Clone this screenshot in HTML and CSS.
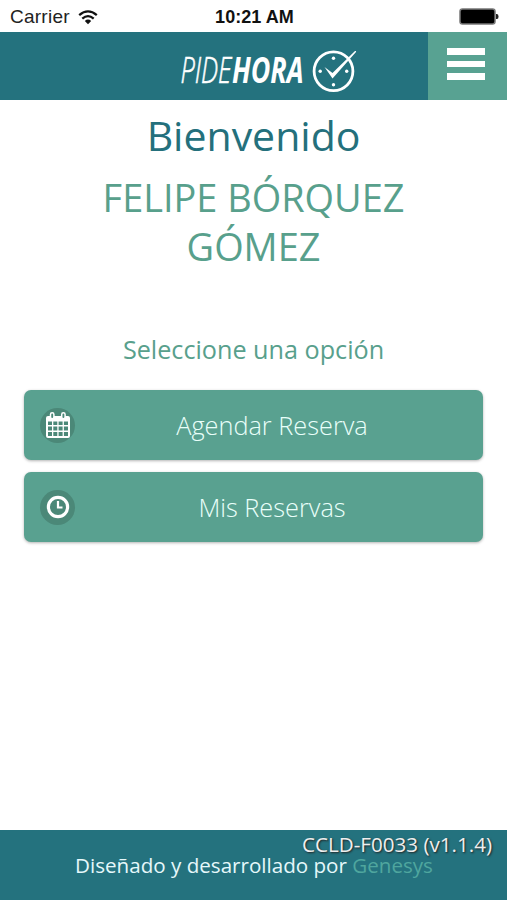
FILE: index.html
```html
<!DOCTYPE html>
<html lang="es">
  <head>
    <meta charset="UTF-8" />
    <meta name="viewport" content="width=device-width, initial-scale=1.0" />
    <title>PideHora</title>
    <link rel="stylesheet" href="styles.css">
  </head>
  <body>
    <div class="status-bar">
      <div class="carrier">
        <span>Carrier</span>
        <svg width="20" height="15" viewBox="0 0 20 15" fill="none" stroke="#111" stroke-width="2.3">
          <path d="M1.2 5.2 Q10 -2.4 18.8 5.2" />
          <path d="M4.3 8.6 Q10 3.6 15.7 8.6" />
          <path d="M6.8 11 Q10 8.2 13.2 11 L10 14.3 Z" fill="#111" stroke="none" />
        </svg>
      </div>
      <div class="time">10:21 AM</div>
      <div class="battery">
        <svg width="40" height="18" viewBox="0 0 40 18">
          <rect x="1" y="1" width="35" height="15" rx="2.5" fill="#000" stroke="#777" stroke-width="1.5" />
          <path d="M37 6 h1 q1.5 0 1.5 2.5 t-1.5 2.5 h-1 z" fill="#222" />
        </svg>
      </div>
    </div>

    <header class="header">
      <svg class="logo" width="180" height="68" viewBox="0 0 180 68">
        <text class="logo-light" x="1.5" y="51" textLength="51" lengthAdjust="spacingAndGlyphs">PIDE</text>
        <text class="logo-bold" x="53" y="51" textLength="71.5" lengthAdjust="spacingAndGlyphs">HORA</text>
        <circle cx="154.5" cy="39.2" r="19.4" fill="none" stroke="#fff" stroke-width="2.8" />
        <g fill="#fff">
          <circle cx="154.5" cy="26.2" r="1.7" />
          <circle cx="167.7" cy="39.2" r="1.7" />
          <circle cx="154.5" cy="52.7" r="1.7" />
          <circle cx="141.2" cy="39.2" r="1.7" />
          <path d="M145.5 35 L153.5 41 L176 19 Q177.5 18.5 177 20 L153.5 46.5 Z" />
        </g>
      </svg>
      <button class="menu" aria-label="Menú">
        <span></span>
        <span></span>
        <span></span>
      </button>
    </header>

    <main class="content">
      <h1>Bienvenido</h1>
      <h2>FELIPE BÓRQUEZ<br>GÓMEZ</h2>
      <p class="prompt">Seleccione una opción</p>

      <button class="btn">
        <span class="icon">
          <svg width="26" height="28" viewBox="0 0 26 28">
            <path fill="#fff" fill-rule="evenodd" d="M3 5 H23 Q25 5 25 7 V25 Q25 27 23 27 H3 Q1 27 1 25 V7 Q1 5 3 5 Z
              M3 10.5 V14 H7 V10.5 Z M8.3 10.5 V14 H12.3 V10.5 Z M13.6 10.5 V14 H17.6 V10.5 Z M18.9 10.5 V14 H23 V10.5 Z
              M3 15.5 V19.5 H7 V15.5 Z M8.3 15.5 V19.5 H12.3 V15.5 Z M13.6 15.5 V19.5 H17.6 V15.5 Z M18.9 15.5 V19.5 H23 V15.5 Z
              M3 21 V25 H7 V21 Z M8.3 21 V25 H12.3 V21 Z M13.6 21 V25 H17.6 V21 Z M18.9 21 V25 H23 V21 Z" />
            <g fill="#4b8878" stroke="#fff" stroke-width="1.5">
              <rect x="5.5" y="1.8" width="3.4" height="6" rx="1.7" />
              <rect x="16.7" y="1.8" width="3.4" height="6" rx="1.7" />
            </g>
          </svg>
        </span>
        <span class="label">Agendar Reserva</span>
      </button>
      <button class="btn">
        <span class="icon">
          <svg width="24" height="24" viewBox="0 0 24 24" fill="none" stroke="#fff">
            <circle cx="12" cy="12" r="9.6" stroke-width="3.2" />
            <path d="M12 6 V12.5 H16.5" stroke-width="2.2" />
          </svg>
        </span>
        <span class="label">Mis Reservas</span>
      </button>
    </main>

    <footer class="footer">
      <p class="version">CCLD-F0033 (v1.1.4)</p>
      <p class="credits">Diseñado y desarrollado por <a>Genesys</a></p>
    </footer>
  </body>
</html>
```

FILE: styles.css
```css
* {
  box-sizing: border-box;
}

body {
  display: flex;
  flex-direction: column;
  height: 900px;
  margin: 0;
  background-color: #fff;
  font-family: "Open Sans", sans-serif;
  overflow: hidden;
}

h1,
h2,
p {
  margin: 0;
  font-weight: 400;
}

button {
  border: none;
  cursor: pointer;
  font-family: inherit;
}

svg {
  display: block;
}

.status-bar {
  display: grid;
  grid-template-columns: 1fr auto 1fr;
  align-items: center;
  height: 32px;
  padding: 2px 8px 0 10px;
  color: #222;
  font-family: "Liberation Sans", Arial, sans-serif;
  font-size: 19px;
}

.carrier {
  display: flex;
  align-items: center;
  gap: 8px;
  letter-spacing: 0.25px;
}

.time {
  color: #111;
  font-size: 18px;
  font-weight: 700;
  letter-spacing: 0.05px;
}

.battery {
  justify-self: end;
}

.header {
  display: flex;
  justify-content: flex-end;
  height: 68px;
  background-color: #24727e;
}

.logo {
  margin-right: 69px;
}

.logo text {
  font-size: 36px;
  font-style: italic;
  fill: #fff;
}

.logo-light {
  font-weight: 300;
  stroke: #fff;
  stroke-width: 0.6px;
}

.logo-bold {
  font-weight: 700;
}

.menu {
  display: flex;
  flex-direction: column;
  align-items: center;
  gap: 6px;
  width: 79px;
  padding: 16px 3px 0 0;
  background-color: #58a292;
}

.menu span {
  width: 38px;
  height: 6.5px;
  background-color: #fff;
}

.content {
  display: flex;
  flex: 1;
  flex-direction: column;
  padding: 8px 24px 0;
  text-align: center;
}

h1 {
  color: #24707c;
  font-size: 41px;
  line-height: 54px;
}

h2 {
  margin-top: 11px;
  color: #58a08c;
  font-size: 37.9px;
  line-height: 49px;
}

.prompt {
  margin: 60px 0 23px;
  color: #58a08c;
  font-size: 25.2px;
  line-height: 36px;
}

.btn {
  display: flex;
  align-items: center;
  height: 70px;
  margin-bottom: 12px;
  padding: 0 16px;
  background-color: #59a190;
  border-radius: 7px;
  box-shadow: 0 1px 3px rgba(0, 0, 0, 0.3);
}

.icon {
  display: flex;
  justify-content: center;
  align-items: center;
  width: 35px;
  height: 35px;
  background-color: #4b8878;
  border-radius: 50%;
}

.label {
  flex: 1;
  padding-left: 2px;
  color: #e9fffa;
  font-size: 25.3px;
  font-weight: 300;
}

.footer {
  height: 70px;
  padding: 4px 15px 0 0;
  background-color: #24727e;
  color: #e6f8fb;
  font-size: 20.6px;
  line-height: 21px;
}

.version {
  color: #eee;
  text-align: right;
  text-shadow: 1px 1px 2px #222;
}

.credits {
  padding-left: 16px;
  text-align: center;
}

.credits a {
  color: #4fa69e;
}
```
